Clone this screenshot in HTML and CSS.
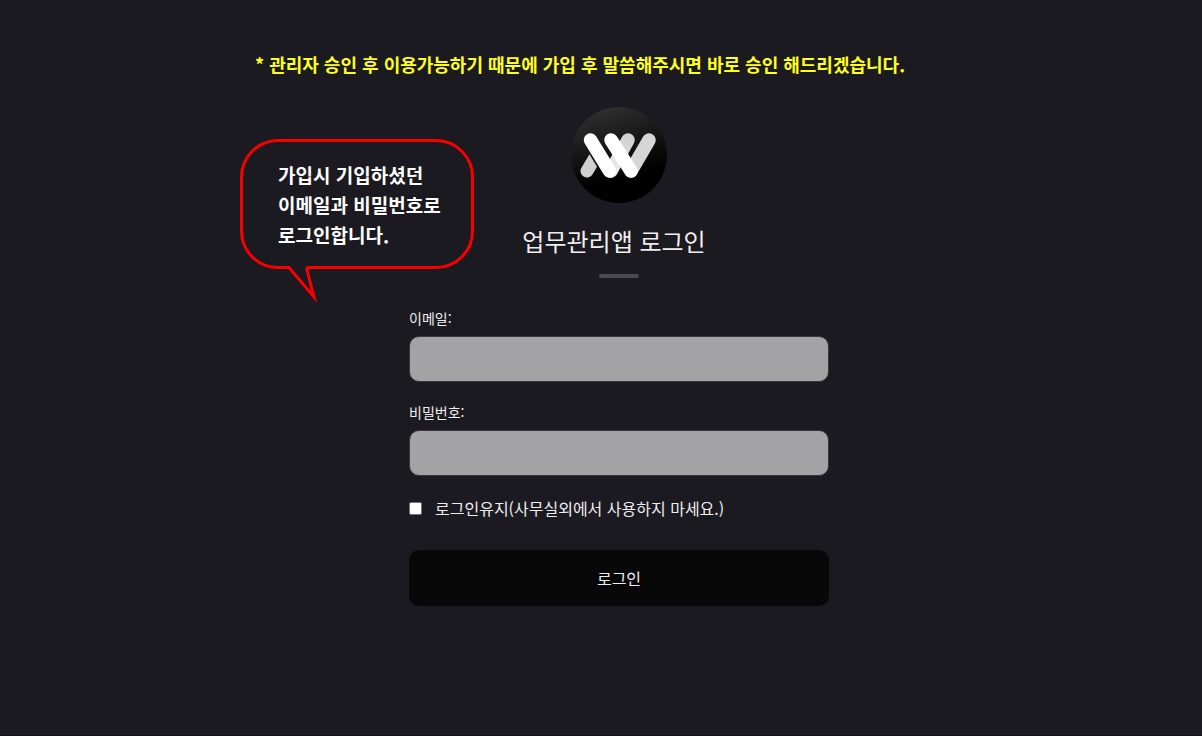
FILE: index.html
```html
<!DOCTYPE html>
<html lang="ko">
<head>
<meta charset="utf-8">
<meta name="viewport" content="width=device-width, initial-scale=1">
<title>업무관리앱 로그인</title>
<link rel="stylesheet" href="styles.css">
</head>
<body>
<main class="page">
  <p class="notice">* 관리자 승인 후 이용가능하기 때문에 가입 후 말씀해주시면 바로 승인 해드리겠습니다.</p>
  <section class="login">
    <svg class="logo" viewBox="0 0 96 96" aria-hidden="true">
      <defs>
        <linearGradient id="disc" x1="0.3" y1="0" x2="0.6" y2="1">
          <stop offset="0" stop-color="#303030"/>
          <stop offset="0.75" stop-color="#000"/>
        </linearGradient>
        <linearGradient id="shade" gradientUnits="userSpaceOnUse" x1="58" y1="30" x2="40" y2="66">
          <stop offset="0" stop-color="#cfcfcf"/>
          <stop offset="1" stop-color="#eee"/>
        </linearGradient>
        <clipPath id="foot"><path d="M0 20H2L34 73H0z"/></clipPath>
      </defs>
      <circle cx="48" cy="48" r="48" fill="url(#disc)"/>
      <g fill="none" stroke-width="13" stroke-linecap="round">
        <path d="M16 64L34.500 33" stroke="#d0d0d0" clip-path="url(#foot)"/>
        <path d="M57 33L40 64" stroke="url(#shade)" stroke-width="13.500"/>
        <path d="M78 33L60 64" stroke="#d6d6d6" stroke-width="13.500"/>
        <path d="M19.500 33L38.500 64M40 33L60 64" stroke="#fff" stroke-width="13.500"/>
      </g>
    </svg>
    <h1 class="title">업무관리앱 로그인</h1>
    <div class="rule"></div>
    <form class="form">
      <label class="label" for="email">이메일:</label>
      <input class="field" id="email" type="email">
      <label class="label" for="password">비밀번호:</label>
      <input class="field" id="password" type="password">
      <div class="keep">
        <input class="check" id="keep" type="checkbox">
        <label for="keep">로그인유지(사무실외에서 사용하지 마세요.)</label>
      </div>
      <button class="submit" type="button">로그인</button>
    </form>
    <aside class="bubble">
      <svg class="outline" viewBox="0 0 236 166" aria-hidden="true">
        <path d="M38 2.500H196A36.500 36.500 0 0 1 232.500 39V92A36.500 36.500 0 0 1 196 129.500H68Q66.500 130 67 132L74 159L49 129.500H38A36.500 36.500 0 0 1 1.500 92V39A36.500 36.500 0 0 1 38 2.500Z" fill="none" stroke="#f80000" stroke-width="3" stroke-miterlimit="8"/>
      </svg>
      <p class="tip">가입시 기입하셨던<br>이메일과 비밀번호로<br>로그인합니다.</p>
    </aside>
  </section>
</main>
</body>
</html>
```
FILE: styles.css
```css
* {
  box-sizing: border-box;
}

body {
  margin: 0;
  background: #1b1a20;
  color: #eee;
  font-family: "Noto Sans CJK KR", sans-serif;
  font-size: 16px;
  line-height: 24px;
}

.page {
  display: flex;
  flex-direction: column;
  align-items: center;
  min-height: 100vh;
  padding: 49px 0 49px 36px;
  border-bottom: 1px solid #141116;
}

.notice {
  margin: 0 78px 28px 0;
  color: #ffff20;
  font-size: 18px;
  font-weight: 700;
  line-height: 30px;
  white-space: nowrap;
}

.login {
  position: relative;
  display: flex;
  flex-direction: column;
  align-items: center;
  width: 100%;
  max-width: 420px;
}

.logo {
  width: 96px;
  height: 96px;
}

.title {
  margin: 18px 0 13px;
  padding-right: 10px;
  font-size: 24px;
  font-weight: 400;
  line-height: 40px;
}

.rule {
  width: 40px;
  height: 4px;
  border-radius: 2px;
  background: #4b4a50;
}

.form {
  display: flex;
  flex-direction: column;
  width: 100%;
  padding-top: 29px;
}

.label {
  margin-bottom: 7px;
  font-size: 14px;
  line-height: 22px;
}

.field {
  width: 100%;
  height: 46px;
  margin: 0 0 19px;
  padding: 0 12px;
  border: 1px solid #38373c;
  border-radius: 10px;
  background: #a3a3a5;
  font: inherit;
}

.keep {
  display: flex;
  align-items: center;
  gap: 13px;
  margin: 1px 0 30px;
}

.check {
  appearance: none;
  width: 13px;
  height: 13px;
  margin: 0;
  border: 1px solid #767676;
  border-radius: 2px;
  background: #fff;
}

.check:checked {
  background: #0075ff;
}

.submit {
  height: 56px;
  border: 0;
  border-radius: 10px;
  background: #080808;
  color: #eee;
  font: inherit;
}

.bubble {
  position: absolute;
  top: 31px;
  left: -169px;
  width: 236px;
  padding: 22px 0 0 38px;
}

.outline {
  position: absolute;
  top: 0;
  left: 0;
  width: 236px;
  height: 166px;
}

.tip {
  margin: 0;
  color: #fff;
  font-size: 19px;
  font-weight: 700;
  line-height: 30px;
  white-space: nowrap;
}
```
